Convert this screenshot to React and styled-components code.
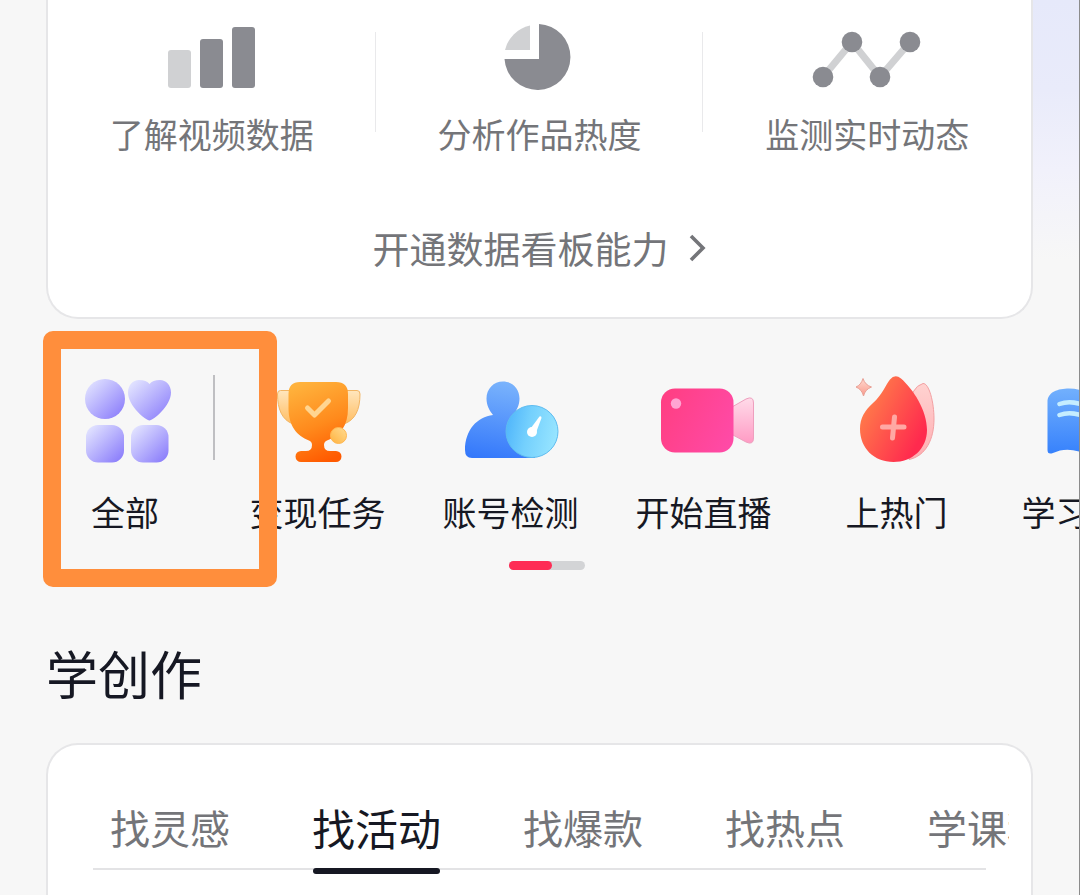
import React, {useState} from 'react';
import styled, {createGlobalStyle} from 'styled-components';

const GlobalStyle = createGlobalStyle`
  * {
    box-sizing: border-box;
  }
  body {
    margin: 0;
    background: #f7f7f7;
    font-family: "Noto Sans CJK SC", "Noto Sans", sans-serif;
    color: #161823;
  }
  button {
    padding: 0;
    border: 0;
    background: none;
    font: inherit;
    color: inherit;
    white-space: nowrap;
    cursor: pointer;
  }
`;

const Page = styled.div`
  display: flex;
  flex-direction: column;
  min-height: 100vh;
  overflow: hidden;
  border-right: 1px solid #8c8c8c;
  background: linear-gradient(#e6e9fa, #e9ebfa 90px, #f1f1fb 170px, #f7f7f7) right top / 50% 260px no-repeat #f7f7f7;
`;
const Card = styled.section`
  margin: 0 46px;
  border: 2px solid #e6e6e8;
  background: #fff;
`;
const DataCard = styled(Card)`
  display: flex;
  flex-direction: column;
  align-items: center;
  gap: 62px;
  padding: 24px 0 42px;
  border-top: 0;
  border-radius: 0 0 32px 32px;
`;
const Features = styled.div`
  display: grid;
  grid-template-columns: repeat(3, 1fr);
  width: 100%;
`;
const Feature = styled.div`
  display: flex;
  flex-direction: column;
  align-items: center;
  gap: 17px;
  background: linear-gradient(#e9e9eb, #e9e9eb) right 8px / 1px 100px no-repeat;

  &:last-child {
    background: none;
  }
`;
const FeatureTitle = styled.span`
  font-size: 34px;
  line-height: 50px;
  color: #747579;
`;
const OpenButton = styled.button`
  display: flex;
  align-items: center;
  gap: 20px;
  font-size: 37px;
  line-height: 54px;
  color: #747579;
`;
const Shortcuts = styled.nav`
  position: relative;
  display: flex;
  padding-top: 53px;
`;
const Pinned = styled.div`
  flex: none;
  width: 221px;
  padding-left: 36px;
  background: linear-gradient(#bfbfc2, #bfbfc2) 213px 3px / 2px 85px no-repeat;
`;
const Scroller = styled.div`
  display: flex;
  flex: 1;
  min-width: 0;
  overflow: hidden;
`;
const Shortcut = styled.button`
  display: flex;
  flex: none;
  flex-direction: column;
  align-items: center;
  gap: 19px;
  width: ${p => p.$wide ? 193 : 178}px;
  font-size: 34px;
  line-height: 50px;
`;
const Highlight = styled.div`
  position: absolute;
  top: 12px;
  left: 43px;
  width: 234px;
  height: 256px;
  border: 18px solid #ff8e3c;
  border-radius: 10px;
  pointer-events: none;
`;
const Pager = styled.div`
  align-self: center;
  width: 76px;
  height: 9px;
  margin: 24px 0 0 14px;
  border-radius: 5px;
  background: #d3d4d6;
`;
const PagerThumb = styled.div`
  width: 43px;
  height: 9px;
  border-radius: 5px;
  background: #fe2c55;
`;
const Title = styled.h2`
  margin: 65px 46px 32px;
  font-size: 52px;
  font-weight: 400;
  line-height: 76px;
`;
const LearnCard = styled(Card)`
  flex: 1;
  padding: 50px 22px 20px 45px;
  border-bottom: 0;
  border-radius: 32px 32px 0 0;
`;
const Tabs = styled.div`
  display: flex;
  gap: 82px;
  padding: 0 0 15px 17px;
  overflow: hidden;
  background: linear-gradient(#e3e3e5, #e3e3e5) 0 73px / calc(100% - 23px) 2px no-repeat;
`;
const Tab = styled.button`
  position: relative;
  flex: none;
  font-size: ${p => p.$active ? 43 : 40}px;
  line-height: 64px;
  color: ${p => p.$active ? '#161823' : '#747579'};

  &::after {
    content: '';
    position: absolute;
    right: 1px;
    bottom: -15px;
    left: 1px;
    height: 6px;
    border-radius: 3px;
    background: ${p => p.$active ? '#161823' : 'none'};
  }
`;

const BarsIcon = () => (
  <svg width="120" height="68" viewBox="0 0 120 68">
    <rect x="16" y="26" width="23" height="38" rx="3" fill="#d0d1d3"/>
    <rect x="48" y="15" width="23" height="49" rx="3" fill="#8a8b91"/>
    <rect x="80" y="3" width="23" height="61" rx="3" fill="#8a8b91"/>
  </svg>
);

const PieIcon = () => (
  <svg width="120" height="68" viewBox="0 0 120 68">
    <path d="M60 0A33 33 0 1 1 25.500 35H60Z" fill="#8a8b91"/>
    <path d="M51 1.500V26H26A33 33 0 0 1 51 1.500Z" fill="#d0d1d3"/>
  </svg>
);

const TrendIcon = () => (
  <svg width="120" height="68" viewBox="0 0 120 68">
    <path d="M16 53L45 18L73 53L103 18" fill="none" stroke="#d0d1d3" strokeWidth="7"/>
    <g fill="#8a8b91">
      <circle cx="16" cy="53" r="10.300"/>
      <circle cx="45" cy="18" r="10.300"/>
      <circle cx="73" cy="53" r="10.300"/>
      <circle cx="103" cy="18" r="10.300"/>
    </g>
  </svg>
);

const AllIcon = () => (
  <svg width="96" height="96" viewBox="0 0 96 96">
    <defs>
      <linearGradient id="all" x1="0" y1="0" x2="1" y2="1">
        <stop offset="0.100" stopColor="#dfe0ff"/>
        <stop offset="0.500" stopColor="#b7b1fd"/>
        <stop offset="0.950" stopColor="#897bfb"/>
      </linearGradient>
    </defs>
    <g fill="url(#all)">
      <circle cx="28" cy="27" r="20"/>
      <path d="M72.500 48.500C69 48.500 51 34 51 20.500C51 13 56 8 62 8C67 8 70.500 9.500 72.500 12C74.500 9.500 78 8 83 8C89 8 94 13 94 20.500C94 34 76 48.500 72.500 48.500Z"/>
      <rect x="9" y="53" width="38" height="37.500" rx="12"/>
      <rect x="54" y="53" width="37.500" height="37.500" rx="12"/>
    </g>
  </svg>
);

const TrophyIcon = () => (
  <svg width="96" height="96" viewBox="0 0 96 96">
    <defs>
      <linearGradient id="cup" x1="0.300" y1="0" x2="0.600" y2="1">
        <stop offset="0" stopColor="#ffb23c"/>
        <stop offset="0.550" stopColor="#ff8a1c"/>
        <stop offset="1" stopColor="#ff5a00"/>
      </linearGradient>
      <linearGradient id="handle" x1="0" y1="0" x2="0" y2="1">
        <stop offset="0" stopColor="#ffe6bd"/>
        <stop offset="1" stopColor="#ffbd62"/>
      </linearGradient>
      <linearGradient id="coin" x1="0" y1="1" x2="1" y2="0">
        <stop offset="0" stopColor="#ffb23e"/>
        <stop offset="1" stopColor="#ffdc93"/>
      </linearGradient>
    </defs>
    <path d="M22 18.500H10.500Q7.500 18.500 7.500 22C7.500 37 12 48 23 52Z" fill="url(#handle)" stroke="#f2b564"/>
    <path d="M75 18.500H87Q90 18.500 90 22C90 38 85 48 74 52Z" fill="url(#handle)" stroke="#f2b564"/>
    <path
      d="M30 10H66Q78 10 78 22V36C78 54 70 64 57 68.500Q54 69.500 54 73Q54 79 60 79H66A5.500 5.500 0 0 1 66 90H31A5.500 5.500 0 0 1 31 79H36Q42 79 42 73Q42 69.500 39 68.500C27 64 18.500 54 18.500 36V22Q18.500 10 30 10Z"
      fill="url(#cup)"
    />
    <path d="M37.500 36L44.500 43L58.500 29" fill="none" stroke="#ffd591" strokeWidth="5" strokeLinecap="round" strokeLinejoin="round"/>
    <circle cx="68.500" cy="63.500" r="8" fill="url(#coin)" stroke="#ffb752"/>
  </svg>
);

const AccountIcon = () => (
  <svg width="96" height="96" viewBox="0 0 96 96">
    <defs>
      <linearGradient id="person" gradientUnits="userSpaceOnUse" x1="44" y1="8" x2="30" y2="88">
        <stop offset="0" stopColor="#7cb5fc"/>
        <stop offset="1" stopColor="#3478fb"/>
      </linearGradient>
      <linearGradient id="dial" x1="0" y1="0.200" x2="1" y2="0.400">
        <stop offset="0" stopColor="#4eb4fb"/>
        <stop offset="0.450" stopColor="#74d0fd"/>
        <stop offset="1" stopColor="#96e4ff"/>
      </linearGradient>
    </defs>
    <path
      d="M40 9.500C49.500 9.500 56.500 17 56.500 26.500C56.500 33 54 38 50 43C62 45 72 54 72 68V86H9Q2 86 2 78C2 58 14 45 30 43C26 38 23.500 33 23.500 26.500C23.500 17 30.500 9.500 40 9.500Z"
      fill="url(#person)"
    />
    <circle cx="69" cy="59.500" r="26" fill="url(#dial)" stroke="#5ebcf0"/>
    <circle cx="69" cy="60" r="5" fill="#fff"/>
    <path d="M66.500 58L76.500 44.500Q78.500 43.500 78.500 46L72.500 62Z" fill="#fff"/>
  </svg>
);

const CameraIcon = () => (
  <svg width="96" height="96" viewBox="0 0 96 96" overflow="visible">
    <defs>
      <linearGradient id="camera" x1="0" y1="0.300" x2="1" y2="0.700">
        <stop offset="0" stopColor="#ff3f84"/>
        <stop offset="1" stopColor="#ff4aa6"/>
      </linearGradient>
      <linearGradient id="lens" x1="0" y1="0" x2="0" y2="1">
        <stop offset="0" stopColor="#ffdbe9"/>
        <stop offset="1" stopColor="#ff9bc4"/>
      </linearGradient>
    </defs>
    <path d="M76 35L90 27Q97.500 23.500 97.500 31V66Q97.500 73.500 90 70L76 62.500Z" fill="url(#lens)" stroke="#ee9fbe"/>
    <rect x="5" y="16.500" width="72.500" height="64" rx="14" fill="url(#camera)"/>
    <circle cx="20" cy="31.500" r="5.200" fill="#ffa5d2"/>
  </svg>
);

const FlameIcon = () => (
  <svg width="96" height="96" viewBox="0 0 96 96">
    <defs>
      <linearGradient id="drop" x1="0.100" y1="0.300" x2="0.850" y2="0.800">
        <stop offset="0" stopColor="#ff7a4a"/>
        <stop offset="1" stopColor="#ff2a4e"/>
      </linearGradient>
      <linearGradient id="petal" x1="0" y1="0" x2="0" y2="1">
        <stop offset="0" stopColor="#ffd2d0"/>
        <stop offset="1" stopColor="#ffadb2"/>
      </linearGradient>
      <linearGradient id="spark" x1="0" y1="0" x2="0" y2="1">
        <stop offset="0" stopColor="#ffd9d0"/>
        <stop offset="1" stopColor="#f99a8c"/>
      </linearGradient>
    </defs>
    <path d="M64 20Q68 13 74 11.500C80 11 85 30 85 47C85 67 77 84 60 87.500Z" fill="url(#petal)" stroke="#f3a0a2"/>
    <path
      d="M41 7.500Q46 1.500 52 6.500C64 17 78 38 78 58C78 77 63 90 44.500 90C25 90 11 76 11 57C11 46 16 38 24 31C33 23 36 14 41 7.500Z"
      fill="url(#drop)"
    />
    <path d="M33.500 55H55M45.500 45L43.500 66" fill="none" stroke="#ffa8a4" strokeWidth="5" strokeLinecap="round"/>
    <path d="M14 6.500Q16 13 22.500 15Q16 17.500 14.500 24Q13 17.500 7 15Q12 13 14 6.500Z" fill="url(#spark)" stroke="#e9a095"/>
  </svg>
);

const BookIcon = () => (
  <svg width="96" height="96" viewBox="0 0 96 96">
    <defs>
      <linearGradient id="book" x1="0" y1="0" x2="0" y2="1">
        <stop offset="0" stopColor="#72b0fd"/>
        <stop offset="1" stopColor="#3580fc"/>
      </linearGradient>
    </defs>
    <path
      d="M5.500 30C5.500 20 16 16.500 27 16.500Q40 16.500 48 24Q56 16.500 69 16.500C80 16.500 90.500 20 90.500 30V78Q90.500 83 85 81Q69 73 48 84Q27 73 11 81Q5.500 83 5.500 78Z"
      fill="url(#book)"
    />
    <path d="M17.500 32Q27 28.500 38 32M17.500 43Q27 39.500 38 43M58 32Q69 28.500 78 32M58 43Q69 39.500 78 43" fill="none" stroke="#c5edff" strokeWidth="4.500" strokeLinecap="round"/>
  </svg>
);

const ChevronIcon = () => (
  <svg width="18" height="30" viewBox="0 0 18 30">
    <path d="M2 3L14 15L2 27" fill="none" stroke="#747579" strokeWidth="3.600"/>
  </svg>
);

const features = [
  {title: '了解视频数据', Icon: BarsIcon},
  {title: '分析作品热度', Icon: PieIcon},
  {title: '监测实时动态', Icon: TrendIcon},
];

const shortcuts = [
  {title: '变现任务', Icon: TrophyIcon},
  {title: '账号检测', Icon: AccountIcon},
  {title: '开始直播', Icon: CameraIcon},
  {title: '上热门', Icon: FlameIcon},
  {title: '学习中心', Icon: BookIcon},
];

const tabs = ['找灵感', '找活动', '找爆款', '找热点', '学课程'];

const App = () => {
  const [activeTab, setActiveTab] = useState('找活动');

  return (
    <Page>
      <GlobalStyle/>
      <DataCard>
        <Features>
          {features.map(({title, Icon}) => (
            <Feature key={title}>
              <Icon/>
              <FeatureTitle>{title}</FeatureTitle>
            </Feature>
          ))}
        </Features>
        <OpenButton>
          开通数据看板能力
          <ChevronIcon/>
        </OpenButton>
      </DataCard>

      <Shortcuts>
        <Pinned>
          <Shortcut>
            <AllIcon/>
            全部
          </Shortcut>
        </Pinned>
        <Scroller>
          {shortcuts.map(({title, Icon}) => (
            <Shortcut key={title} $wide>
              <Icon/>
              {title}
            </Shortcut>
          ))}
        </Scroller>
        <Highlight/>
      </Shortcuts>
      <Pager>
        <PagerThumb/>
      </Pager>

      <Title>学创作</Title>
      <LearnCard>
        <Tabs role="tablist">
          {tabs.map(tab => (
            <Tab
              key={tab}
              role="tab"
              aria-selected={tab === activeTab}
              $active={tab === activeTab}
              onClick={() => setActiveTab(tab)}
            >
              {tab}
            </Tab>
          ))}
        </Tabs>
      </LearnCard>
    </Page>
  );
};

export default App;
